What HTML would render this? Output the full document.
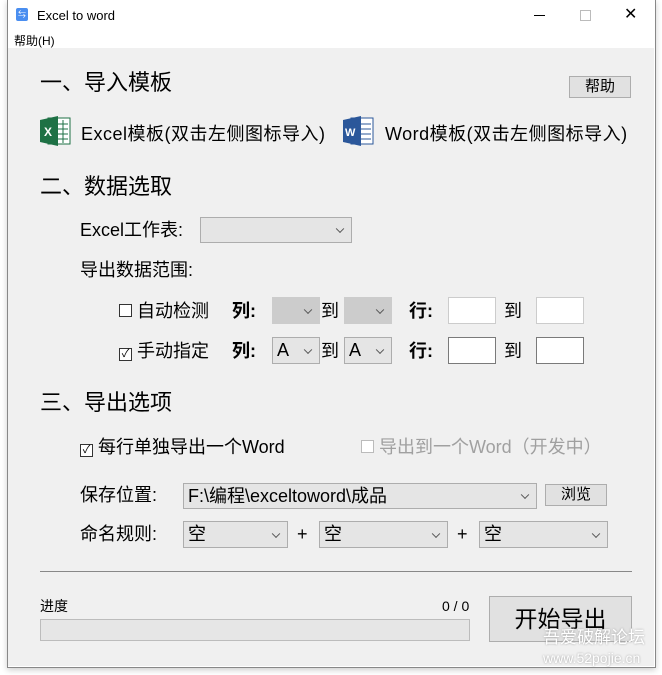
<!DOCTYPE html><html><head><meta charset="utf-8"><style>
body{margin:0;width:662px;height:675px;background:#fff;font-family:"Liberation Sans","Microsoft YaHei","Noto Sans CJK SC",sans-serif;position:relative;overflow:hidden;color:#000}
.a{position:absolute;white-space:nowrap;line-height:1}
.win{position:absolute;left:7px;top:0;width:647px;height:667px;border:1px solid #888;border-top:none;background:#fff;box-shadow:0 2px 6px rgba(0,0,0,.2)}
.cont{position:absolute;left:8px;top:48px;width:646px;height:618px;background:#f0f0f0}
.h{font-size:22px}
.t{font-size:18px}
.cb{display:inline-block;width:11px;height:11px;border:1px solid #333;background:#fff;vertical-align:0px;margin-right:5px;font-size:11px;line-height:11px;text-align:center}
.sel{position:absolute;border:1px solid #adadad;background:#e5e5e5;box-sizing:border-box;font-size:18px;padding-left:4px;line-height:24px}
.sel:after{content:"";position:absolute;right:8px;top:50%;width:5px;height:5px;border-right:1px solid #555;border-bottom:1px solid #555;transform:translateY(-70%) rotate(45deg)}
.inp{position:absolute;background:#fff;border:1px solid #7a7a7a;box-sizing:border-box}
.btn{position:absolute;border:1px solid #adadad;background:#e1e1e1;box-sizing:border-box;text-align:center}
</style></head><body>
<div class="win"></div>
<div class="a" style="left:16px;top:8px;width:12px;height:13px;background:#4a8ef0;border-radius:2px;color:#fff;font-size:8px;text-align:center;line-height:13px">⇆</div>
<div class="a" style="left:37px;top:9px;font-size:13px">Excel to word</div>
<div class="a" style="left:534px;top:15px;width:11px;height:1px;background:#000"></div>
<div class="a" style="left:580px;top:10px;width:9px;height:9px;border:1px solid #bbb"></div>
<div class="a" style="left:624px;top:7px;font-size:16px;font-weight:300">✕</div>
<div class="a" style="left:14px;top:35px;font-size:12px">帮助(H)</div>
<div class="cont"></div>
<div class="a h" style="left:40px;top:72px">一、导入模板</div>
<div class="btn" style="left:569px;top:76px;width:62px;height:22px;font-size:15px;line-height:20px">帮助</div>
<svg class="a" style="left:40px;top:115px" width="32" height="32"><rect x="8" y="3" width="22" height="26" fill="#fff" stroke="#1e7145"/><g stroke="#1e7145"><line x1="18" y1="9" x2="28" y2="9"/><line x1="18" y1="14" x2="28" y2="14"/><line x1="18" y1="19" x2="28" y2="19"/><line x1="18" y1="24" x2="28" y2="24"/><line x1="23" y1="5" x2="23" y2="28"/></g><path d="M0 5 L18 1 L18 31 L0 27Z" fill="#1e7145"/><text x="4" y="21" fill="#fff" font-size="12" font-weight="bold" font-family="Liberation Sans">X</text></svg>
<div class="a t" style="left:81px;top:125px;letter-spacing:.5px">Excel模板(双击左侧图标导入)</div>
<svg class="a" style="left:343px;top:115px" width="32" height="32"><rect x="8" y="3" width="22" height="26" fill="#fff" stroke="#2b579a"/><g stroke="#2b579a"><line x1="18" y1="9" x2="28" y2="9"/><line x1="18" y1="14" x2="28" y2="14"/><line x1="18" y1="19" x2="28" y2="19"/><line x1="18" y1="24" x2="28" y2="24"/></g><path d="M0 5 L18 1 L18 31 L0 27Z" fill="#2b579a"/><text x="2" y="21" fill="#fff" font-size="11" font-weight="bold" font-family="Liberation Sans">W</text></svg>
<div class="a t" style="left:385px;top:125px;letter-spacing:.5px">Word模板(双击左侧图标导入)</div>
<div class="a h" style="left:40px;top:176px">二、数据选取</div>
<div class="a t" style="left:80px;top:221px">Excel工作表:</div>
<div class="sel" style="left:200px;top:217px;width:152px;height:26px"></div>
<div class="a t" style="left:80px;top:261px">导出数据范围:</div>
<div class="a t" style="left:119px;top:302px"><span class="cb"></span>自动检测</div>
<div class="a t" style="left:232px;top:302px;font-weight:bold">列:</div>
<div class="sel" style="left:272px;top:297px;width:48px;height:27px;background:#ccc;border-color:#ccc"></div>
<div class="a t" style="left:321px;top:302px">到</div>
<div class="sel" style="left:344px;top:297px;width:48px;height:27px;background:#ccc;border-color:#ccc"></div>
<div class="a t" style="left:409px;top:302px;font-weight:bold">行:</div>
<div class="inp" style="left:448px;top:297px;width:48px;height:27px;border-color:#ccc"></div>
<div class="a t" style="left:504px;top:302px">到</div>
<div class="inp" style="left:536px;top:297px;width:48px;height:27px;border-color:#ccc"></div>
<div class="a t" style="left:119px;top:342px"><span class="cb">✓</span>手动指定</div>
<div class="a t" style="left:232px;top:342px;font-weight:bold">列:</div>
<div class="sel" style="left:272px;top:337px;width:48px;height:27px">A</div>
<div class="a t" style="left:321px;top:342px">到</div>
<div class="sel" style="left:344px;top:337px;width:48px;height:27px">A</div>
<div class="a t" style="left:409px;top:342px;font-weight:bold">行:</div>
<div class="inp" style="left:448px;top:337px;width:48px;height:27px"></div>
<div class="a t" style="left:504px;top:342px">到</div>
<div class="inp" style="left:536px;top:337px;width:48px;height:27px"></div>
<div class="a h" style="left:40px;top:392px">三、导出选项</div>
<div class="a t" style="left:80px;top:438px"><span class="cb">✓</span>每行单独导出一个Word</div>
<div class="a t" style="left:361px;top:438px;color:#a0a0a0"><span class="cb" style="border-color:#bbb"></span>导出到一个Word（开发中）</div>
<div class="a t" style="left:80px;top:486px">保存位置:</div>
<div class="sel" style="left:183px;top:483px;width:354px;height:26px">F:\编程\exceltoword\成品</div>
<div class="btn" style="left:545px;top:484px;width:62px;height:22px;font-size:15px;line-height:20px">浏览</div>
<div class="a t" style="left:80px;top:525px">命名规则:</div>
<div class="sel" style="left:183px;top:521px;width:105px;height:27px">空</div>
<div class="a t" style="left:297px;top:525px">+</div>
<div class="sel" style="left:319px;top:521px;width:129px;height:27px">空</div>
<div class="a t" style="left:457px;top:525px">+</div>
<div class="sel" style="left:479px;top:521px;width:129px;height:27px">空</div>
<div class="a" style="left:40px;top:571px;width:592px;height:1px;background:#888"></div>
<div class="a" style="left:40px;top:599px;font-size:14px">进度</div>
<div class="a" style="left:442px;top:599px;font-size:14px">0 / 0</div>
<div class="a" style="left:40px;top:619px;width:430px;height:22px;border:1px solid #bcbcbc;background:#e6e6e6;box-sizing:border-box"></div>
<div class="btn" style="left:489px;top:596px;width:143px;height:46px;font-size:23px;line-height:44px">开始导出</div>
<div class="a" style="left:543px;top:629px;font-size:17px;color:#fff;text-shadow:0 0 2px #999">吾爱破解论坛</div>
<div class="a" style="left:543px;top:651px;font-size:14px;color:#fff;text-shadow:0 0 2px #999">www.52pojie.cn</div>
</body></html>
